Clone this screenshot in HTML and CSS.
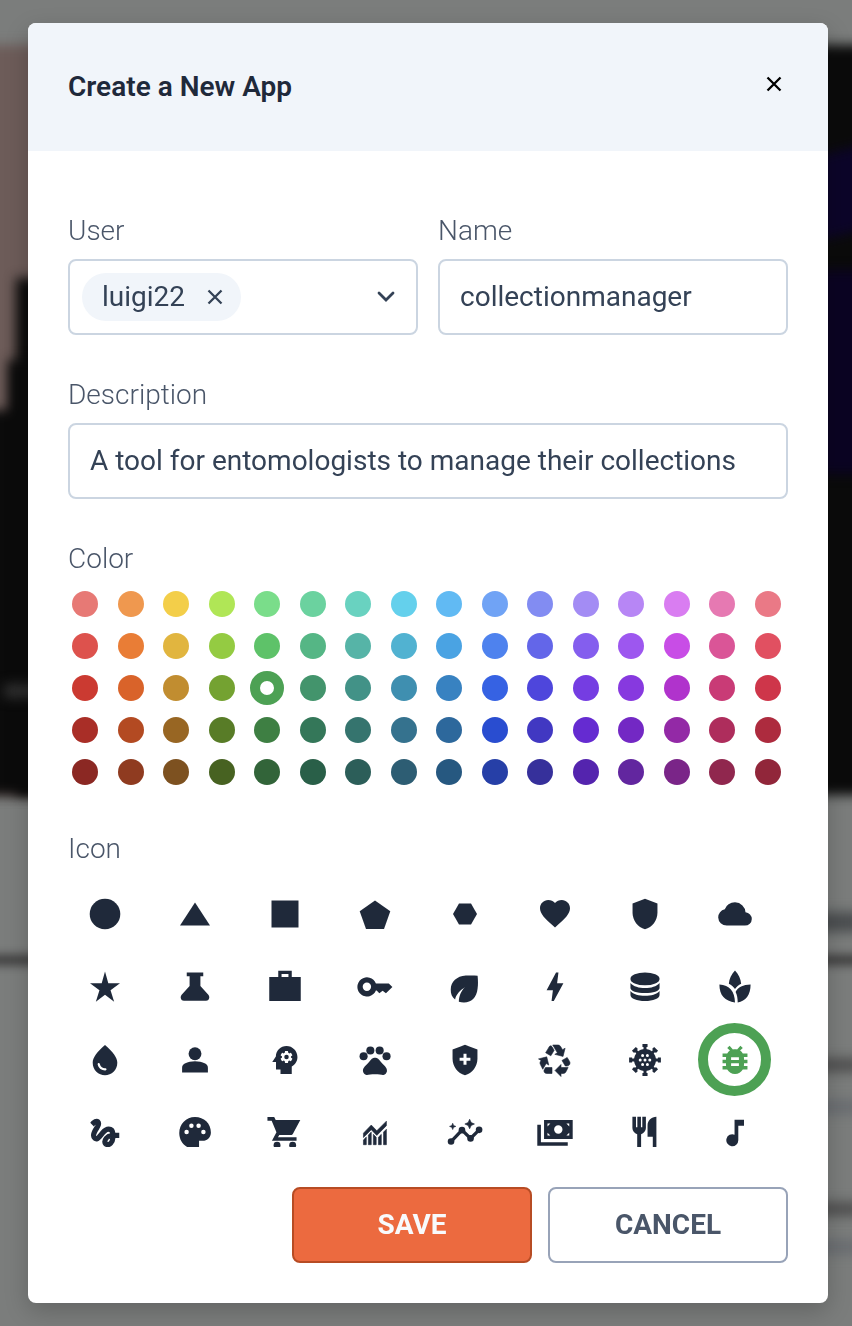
FILE: index.html
```html
<!DOCTYPE html>
<html lang="en">
<head>
<meta charset="utf-8">
<meta name="viewport" content="width=device-width, initial-scale=1">
<title>Create a New App</title>
<link rel="stylesheet" href="styles.css">
</head>
<body>
<div class="backdrop" aria-hidden="true">
  <div class="scene scene-hero"></div>
  <div class="scene scene-skyline"></div>
  <div class="scene scene-skyline-low"></div>
  <div class="scene scene-glow"></div>
  <div class="scene scene-glow-low"></div>
  <div class="scene scene-caption"></div>
  <div class="scene scene-heading"></div>
  <div class="scene scene-rule"></div>
  <div class="scene scene-line line-a"></div>
  <div class="scene scene-line line-b"></div>
  <div class="scene scene-line line-c"></div>
  <div class="scene scene-line line-d"></div>
</div>
<main class="page">
<form class="modal" role="dialog" aria-labelledby="modal-title">
  <header class="modal-header">
    <h1 class="modal-title" id="modal-title">Create a New App</h1>
    <button class="close" type="button" aria-label="Close"><svg class="cross" viewBox="0 0 16 16"><path d="M1.5 1.5l13 13M14.5 1.5l-13 13"/></svg></button>
  </header>
  <div class="modal-body">
    <div class="row">
      <div class="field">
        <label class="label" for="user">User</label>
        <div class="control multiselect">
          <span class="tag">luigi22<button class="tag-remove" type="button" aria-label="Remove luigi22"><svg class="cross" viewBox="0 0 16 16"><path d="M1.5 1.5l13 13M14.5 1.5l-13 13"/></svg></button></span>
          <input class="multiselect-input" id="user" type="text" role="combobox" aria-expanded="false">
          <button class="toggle" type="button" aria-label="Show users"><svg class="chevron" viewBox="0 0 18 12"><path d="M2 2l7 7 7-7"/></svg></button>
        </div>
      </div>
      <div class="field">
        <label class="label" for="name">Name</label>
        <input class="control" id="name" type="text" value="collectionmanager">
      </div>
    </div>
    <div class="field">
      <label class="label" for="description">Description</label>
      <input class="control" id="description" type="text" value="A tool for entomologists to manage their collections">
    </div>
    <fieldset class="field">
      <legend class="label">Color</legend>
      <div class="swatches">
        <input class="swatch" type="radio" name="color" aria-label="red 400" style="--c:#e77975">
        <input class="swatch" type="radio" name="color" aria-label="orange 400" style="--c:#ef984f">
        <input class="swatch" type="radio" name="color" aria-label="yellow 400" style="--c:#f3ce49">
        <input class="swatch" type="radio" name="color" aria-label="lime 400" style="--c:#b0e656">
        <input class="swatch" type="radio" name="color" aria-label="green 400" style="--c:#7add8a">
        <input class="swatch" type="radio" name="color" aria-label="emerald 400" style="--c:#6bd29f">
        <input class="swatch" type="radio" name="color" aria-label="teal 400" style="--c:#69d2c0">
        <input class="swatch" type="radio" name="color" aria-label="cyan 400" style="--c:#64d0ec">
        <input class="swatch" type="radio" name="color" aria-label="sky 400" style="--c:#61baf3">
        <input class="swatch" type="radio" name="color" aria-label="blue 400" style="--c:#70a3f5">
        <input class="swatch" type="radio" name="color" aria-label="indigo 400" style="--c:#828cf2">
        <input class="swatch" type="radio" name="color" aria-label="violet 400" style="--c:#a38cf4">
        <input class="swatch" type="radio" name="color" aria-label="purple 400" style="--c:#b786f5">
        <input class="swatch" type="radio" name="color" aria-label="fuchsia 400" style="--c:#d97df1">
        <input class="swatch" type="radio" name="color" aria-label="pink 400" style="--c:#e679b2">
        <input class="swatch" type="radio" name="color" aria-label="rose 400" style="--c:#ea7986">
        <input class="swatch" type="radio" name="color" aria-label="red 500" style="--c:#dd524d">
        <input class="swatch" type="radio" name="color" aria-label="orange 500" style="--c:#e97d36">
        <input class="swatch" type="radio" name="color" aria-label="yellow 500" style="--c:#e1b53f">
        <input class="swatch" type="radio" name="color" aria-label="lime 500" style="--c:#94cb42">
        <input class="swatch" type="radio" name="color" aria-label="green 500" style="--c:#5ec269">
        <input class="swatch" type="radio" name="color" aria-label="emerald 500" style="--c:#55b685">
        <input class="swatch" type="radio" name="color" aria-label="teal 500" style="--c:#56b4a7">
        <input class="swatch" type="radio" name="color" aria-label="cyan 500" style="--c:#51b2d1">
        <input class="swatch" type="radio" name="color" aria-label="sky 500" style="--c:#4aa3e3">
        <input class="swatch" type="radio" name="color" aria-label="blue 500" style="--c:#4e82ee">
        <input class="swatch" type="radio" name="color" aria-label="indigo 500" style="--c:#6366e9">
        <input class="swatch" type="radio" name="color" aria-label="violet 500" style="--c:#845eee">
        <input class="swatch" type="radio" name="color" aria-label="purple 500" style="--c:#9d57ef">
        <input class="swatch" type="radio" name="color" aria-label="fuchsia 500" style="--c:#c84de6">
        <input class="swatch" type="radio" name="color" aria-label="pink 500" style="--c:#da5597">
        <input class="swatch" type="radio" name="color" aria-label="rose 500" style="--c:#e15061">
        <input class="swatch" type="radio" name="color" aria-label="red 600" style="--c:#cb3a31">
        <input class="swatch" type="radio" name="color" aria-label="orange 600" style="--c:#d9632a">
        <input class="swatch" type="radio" name="color" aria-label="yellow 600" style="--c:#c18d30">
        <input class="swatch" type="radio" name="color" aria-label="lime 600" style="--c:#74a231">
        <input class="swatch" type="radio" name="color" aria-label="green 600" style="--c:#4da154" checked>
        <input class="swatch" type="radio" name="color" aria-label="emerald 600" style="--c:#43946c">
        <input class="swatch" type="radio" name="color" aria-label="teal 600" style="--c:#429287">
        <input class="swatch" type="radio" name="color" aria-label="cyan 600" style="--c:#3f8fb0">
        <input class="swatch" type="radio" name="color" aria-label="sky 600" style="--c:#3882c1">
        <input class="swatch" type="radio" name="color" aria-label="blue 600" style="--c:#3662e3">
        <input class="swatch" type="radio" name="color" aria-label="indigo 600" style="--c:#4e46dc">
        <input class="swatch" type="radio" name="color" aria-label="violet 600" style="--c:#753de2">
        <input class="swatch" type="radio" name="color" aria-label="purple 600" style="--c:#8739df">
        <input class="swatch" type="radio" name="color" aria-label="fuchsia 600" style="--c:#b033cc">
        <input class="swatch" type="radio" name="color" aria-label="pink 600" style="--c:#c93b76">
        <input class="swatch" type="radio" name="color" aria-label="rose 600" style="--c:#ce364a">
        <input class="swatch" type="radio" name="color" aria-label="red 700" style="--c:#a92e27">
        <input class="swatch" type="radio" name="color" aria-label="orange 700" style="--c:#b34a22">
        <input class="swatch" type="radio" name="color" aria-label="yellow 700" style="--c:#986623">
        <input class="swatch" type="radio" name="color" aria-label="lime 700" style="--c:#587c27">
        <input class="swatch" type="radio" name="color" aria-label="green 700" style="--c:#3e7f43">
        <input class="swatch" type="radio" name="color" aria-label="emerald 700" style="--c:#347759">
        <input class="swatch" type="radio" name="color" aria-label="teal 700" style="--c:#35746e">
        <input class="swatch" type="radio" name="color" aria-label="cyan 700" style="--c:#35728e">
        <input class="swatch" type="radio" name="color" aria-label="sky 700" style="--c:#2d689c">
        <input class="swatch" type="radio" name="color" aria-label="blue 700" style="--c:#294dd0">
        <input class="swatch" type="radio" name="color" aria-label="indigo 700" style="--c:#4138c2">
        <input class="swatch" type="radio" name="color" aria-label="violet 700" style="--c:#652bd1">
        <input class="swatch" type="radio" name="color" aria-label="purple 700" style="--c:#7328c4">
        <input class="swatch" type="radio" name="color" aria-label="fuchsia 700" style="--c:#9329a6">
        <input class="swatch" type="radio" name="color" aria-label="pink 700" style="--c:#ae2d5c">
        <input class="swatch" type="radio" name="color" aria-label="rose 700" style="--c:#ad2b3e">
        <input class="swatch" type="radio" name="color" aria-label="red 800" style="--c:#8b2823">
        <input class="swatch" type="radio" name="color" aria-label="orange 800" style="--c:#8f3b20">
        <input class="swatch" type="radio" name="color" aria-label="yellow 800" style="--c:#7d5120">
        <input class="swatch" type="radio" name="color" aria-label="lime 800" style="--c:#476221">
        <input class="swatch" type="radio" name="color" aria-label="green 800" style="--c:#326439">
        <input class="swatch" type="radio" name="color" aria-label="emerald 800" style="--c:#295f48">
        <input class="swatch" type="radio" name="color" aria-label="teal 800" style="--c:#2c5e59">
        <input class="swatch" type="radio" name="color" aria-label="cyan 800" style="--c:#2d5d73">
        <input class="swatch" type="radio" name="color" aria-label="sky 800" style="--c:#265880">
        <input class="swatch" type="radio" name="color" aria-label="blue 800" style="--c:#263fa7">
        <input class="swatch" type="radio" name="color" aria-label="indigo 800" style="--c:#36309b">
        <input class="swatch" type="radio" name="color" aria-label="violet 800" style="--c:#5424ae">
        <input class="swatch" type="radio" name="color" aria-label="purple 800" style="--c:#62269f">
        <input class="swatch" type="radio" name="color" aria-label="fuchsia 800" style="--c:#7a2588">
        <input class="swatch" type="radio" name="color" aria-label="pink 800" style="--c:#90274e">
        <input class="swatch" type="radio" name="color" aria-label="rose 800" style="--c:#91263a">
      </div>
    </fieldset>
    <fieldset class="field">
      <legend class="label">Icon</legend>
      <div class="icons">
        <label class="icon"><input type="radio" name="icon" aria-label="circle"><svg viewBox="0 0 24 24"><circle cx="12" cy="12" r="10.2"/></svg></label>
        <label class="icon"><input type="radio" name="icon" aria-label="triangle"><svg viewBox="0 0 24 24"><path d="M12 4.4l10 15.2H2z"/></svg></label>
        <label class="icon"><input type="radio" name="icon" aria-label="square"><svg viewBox="0 0 24 24"><path d="M3 3h18v18H3z"/></svg></label>
        <label class="icon"><input type="radio" name="icon" aria-label="pentagon"><svg viewBox="0 0 24 24"><path d="M12 3l10.2 7.2L18 22H6L1.8 10.2z"/></svg></label>
        <label class="icon"><input type="radio" name="icon" aria-label="hexagon"><svg viewBox="0 0 24 24"><path d="M8 5h8l4 7-4 7H8l-4-7z"/></svg></label>
        <label class="icon"><input type="radio" name="icon" aria-label="heart"><svg viewBox="0 0 24 24"><path d="M12 21l-1.450-1.320C5.400 15.010 2 11.930 2 8.150 2 5.070 4.420 2.650 7.500 2.650c1.740 0 3.410.810 4.500 2.090 1.090-1.280 2.760-2.090 4.500-2.090 3.080 0 5.500 2.420 5.500 5.500 0 3.780-3.400 6.860-8.550 11.540z"/></svg></label>
        <label class="icon"><input type="radio" name="icon" aria-label="shield"><svg viewBox="0 0 24 24"><path d="M12 1.900 3.700 5v6.100c0 5.050 3.500 9.760 8.300 11 4.800-1.240 8.300-5.950 8.300-11V5z"/></svg></label>
        <label class="icon"><input type="radio" name="icon" aria-label="cloud"><svg viewBox="0 0 24 24"><path d="M6.500 19.700q-2.375 0-4-1.600T.800 14.300q0-1.950 1.200-3.475T5.200 8.900q.600-2.100 2.500-3.400T12 4.200q2.900 0 4.950 2.050T19 10.800q1.800.200 3 1.500t1.200 3q0 1.850-1.350 3.125T18.600 19.700z"/></svg></label>

        <label class="icon"><input type="radio" name="icon" aria-label="star"><svg viewBox="0 0 24 24"><path d="M14.200 9.500 12 1.700 9.800 9.500H2l6.300 4.700L5.900 21.800 12 17.200l6.100 4.600-2.400-7.600L22 9.500z"/></svg></label>
        <label class="icon"><input type="radio" name="icon" aria-label="flask"><svg viewBox="0 0 24 24"><path d="M6.500 2.400h11v2.400h-1.900v6.600l5.300 5.800c1.300 1.500.5 4-1.500 4H4.600c-2 0-2.800-2.500-1.500-4l5.300-5.800V4.800H6.500z"/></svg></label>
        <label class="icon"><input type="radio" name="icon" aria-label="briefcase"><svg viewBox="0 0 24 24"><path fill-rule="evenodd" d="M1.500 5.300h6V1.100h9v4.200h6v16h-21zm8.200 0h4.600V3.400H9.700z"/></svg></label>
        <label class="icon"><input type="radio" name="icon" aria-label="key"><svg viewBox="0 0 24 24"><path fill-rule="evenodd" d="M12.600 9.600h8.600l2.400 2.400-4.300 4.200-2.200-1.700-2.200 1.700-1.800-1.900h-.5A6.400 6.400 0 1 1 12.600 9.600zM6.600 9a2.800 2.800 0 1 0 0 5.600 2.800 2.800 0 0 0 0-5.600z"/></svg></label>
        <label class="icon"><input type="radio" name="icon" aria-label="leaf"><svg viewBox="0 0 24 24"><path d="M5.400 20.300C3.300 18.800 2.400 16.400 2.500 13.600 2.600 8.600 6.500 4.800 12.500 4.400c2.500-.2 5.500-.2 7.900.1.300 3 .4 6 0 8.500-.6 6.200-4.400 9.400-9.200 9.300-1.200 0-2.200-.2-3.300-.5 0-3.300 1.500-7.400 4.100-9.600-3.500 1.800-6 5.300-6.600 8.100z"/></svg></label>
        <label class="icon"><input type="radio" name="icon" aria-label="bolt"><svg viewBox="0 0 24 24"><path d="M12.700 2.400h1.600l-.9 7.100h4.200L11.200 21.300H9.700l.9-7.100H6.400z"/></svg></label>
        <label class="icon"><input type="radio" name="icon" aria-label="database"><svg viewBox="0 0 24 24"><ellipse cx="12" cy="6.600" rx="9.700" ry="4.300"/><path d="M2.300 9.300c2 2.300 5.600 3.400 9.700 3.400s7.700-1.100 9.700-3.400v3.300c0 2-4.300 3.400-9.700 3.400s-9.700-1.400-9.700-3.400zM2.300 14.700c2 2.200 5.600 3.200 9.700 3.200s7.700-1 9.700-3.200v2.600c0 2.400-4.300 4-9.700 4s-9.700-1.600-9.700-4z"/></svg></label>
        <label class="icon"><input type="radio" name="icon" aria-label="plant"><svg viewBox="0 0 24 24"><path d="M12 1c2.400 2.400 3.900 5.700 4.100 8.800-1.700.9-3.100 2.100-4.100 3.500-1-1.400-2.400-2.600-4.100-3.500C8.100 6.700 9.600 3.400 12 1zM1.600 10.400c6.800.2 10.200 4.800 10.400 11.900-6.700-.8-10.400-4.600-10.400-11.900zM22.400 10.400c0 7-3.300 11.100-8.600 11.900 0-3-.4-5-1.400-7 1.600-3 5-4.900 10-4.900z"/></svg></label>

        <label class="icon"><input type="radio" name="icon" aria-label="drop"><svg viewBox="0 0 24 24"><path fill-rule="evenodd" d="M12 2c-5.330 4.550-8.200 8.480-8.200 11.800 0 4.980 3.800 8.300 8.200 8.300s8.200-3.320 8.200-8.300c0-3.320-2.870-7.250-8.200-11.800zM7.830 14c.370 0 .670.260.740.620.410 2.220 2.280 2.980 3.640 2.870.430-.020.790.320.790.750 0 .400-.320.730-.720.750-2.130.130-4.620-1.090-5.190-4.120-.080-.450.280-.870.740-.870z"/></svg></label>
        <label class="icon"><input type="radio" name="icon" aria-label="person"><svg viewBox="0 0 24 24"><circle cx="12" cy="7.800" r="4.300"/><path d="M3.400 20.400v-3.200c0-1.300.7-2.300 1.800-2.800 4.300-2 9.300-2 13.600 0 1.100.5 1.800 1.500 1.800 2.800v3.200z"/></svg></label>
        <label class="icon"><input type="radio" name="icon" aria-label="mind"><svg viewBox="0 0 24 24"><circle cx="13" cy="10" r="1.500"/><path fill-rule="evenodd" d="M13 2.700C9.100 2.700 6 5.700 5.900 9.600L3.500 13.300H6v5h3v3h7.500v-5C18.900 15.100 20.300 12.700 20.300 10c0-4-3.300-7.300-7.300-7.300zm3 7.300c0 .13-.01.26-.02.39l.83.66c.08.06.1.16.05.25l-.8 1.390c-.05.09-.16.12-.24.09l-.99-.4c-.21.16-.43.29-.67.39L14 13.830c-.01.1-.1.17-.2.17h-1.600c-.1 0-.18-.07-.2-.17l-.15-1.060c-.25-.1-.47-.23-.68-.39l-.99.4c-.09.03-.2 0-.25-.09l-.8-1.390c-.05-.08-.03-.19.05-.25l.84-.66c-.01-.13-.02-.26-.02-.39s.02-.27.04-.39l-.85-.66c-.08-.06-.1-.16-.05-.26l.8-1.380c.05-.09.15-.12.24-.09l1 .4c.2-.15.43-.29.67-.39L12 6.170c.02-.1.1-.17.2-.17h1.600c.1 0 .18.07.2.17l.15 1.060c.24.1.46.23.67.39l1-.4c.09-.03.2 0 .24.09l.8 1.380c.05.09.03.2-.05.26l-.85.66c.03.12.04.25.04.39z"/></svg></label>
        <label class="icon"><input type="radio" name="icon" aria-label="paw"><svg viewBox="0 0 24 24"><circle cx="4.400" cy="9.500" r="2.700"/><circle cx="8.900" cy="5.700" r="2.700"/><circle cx="15.100" cy="5.700" r="2.700"/><circle cx="19.700" cy="9.500" r="2.700"/><path d="M17.340 14.860c-.87-1.020-1.600-1.890-2.480-2.910-.46-.54-1.050-1.080-1.750-1.320-.7-.2-1.500-.2-2.230.01-.7.240-1.280.780-1.750 1.320-.87 1.020-1.600 1.890-2.480 2.910-1.310 1.310-2.920 2.760-2.620 4.790.29 1.020 1.020 2.030 2.330 2.320.73.150 3.060-.44 5.540-.44h.18c2.480 0 4.810.58 5.540.44 1.310-.29 2.040-1.310 2.330-2.320.31-2.040-1.300-3.490-2.610-4.800z"/></svg></label>
        <label class="icon"><input type="radio" name="icon" aria-label="health shield"><svg viewBox="0 0 24 24"><path fill-rule="evenodd" d="M12 1.900 3.700 5v6.100c0 5.050 3.500 9.760 8.300 11 4.800-1.240 8.300-5.950 8.300-11V5zM8.400 10.500H11V7.900h2v2.600h2.600v2H13v2.600h-2v-2.600H8.400z"/></svg></label>
        <label class="icon"><input type="radio" name="icon" aria-label="recycle"><svg viewBox="0 0 24 24"><path class="heavy" d="M5.770 7.150 7.200 4.780l1.030-1.710c.39-.65 1.330-.65 1.720 0l1.480 2.460-1.230 2.060-1 1.620-3.430-2.060zm15.950 5.820-1.600-2.660-3.460 2L18.870 16H20c.76 0 1.450-.43 1.790-1.110.14-.28.21-.58.21-.89 0-.36-.1-.71-.28-1.030zM16 21h1.500c.76 0 1.450-.43 1.790-1.110L20.740 17H16v-2l-4 4 4 4v-2zm-6-4H5.700l-.84 1.410c-.3.500-.32 1.120-.06 1.650.28.570.87.940 1.520.940H10v-4zm-3.880-2.650 1.730 1.040L6.480 9.900 1 11.270l1.700 1.020-.41.690c-.35.590-.38 1.310-.07 1.920l1.630 3.260 2.270-3.810zm10.900-9.210-1.300-2.170C15.350 2.370 14.700 2 14 2h-3.530l3.120 5.200-1.720 1.030 5.490 1.370 1.370-5.490-1.710 1.030z"/></svg></label>
        <label class="icon"><input type="radio" name="icon" aria-label="virus"><svg viewBox="0 0 24 24"><circle cx="12" cy="12" r="7.300"/><path class="line" stroke-width="2" d="M12 2v20M2 12h20M5.300 5.300l13.400 13.400M18.700 5.300 5.300 18.700M10.300 2.400h3.400M10.300 21.600h3.400M2.400 10.300v3.400M21.600 10.300v3.400M4 6.600 6.600 4M17.400 4 20 6.600M20 17.400 17.400 20M6.600 20 4 17.400"/><path class="dots" d="M10.400 9h0M13.600 9h0M8.800 12h0M12 12h0M15.200 12h0M10.400 15h0M13.600 15h0"/></svg></label>
        <label class="icon"><input type="radio" name="icon" aria-label="bug" checked><svg viewBox="0 0 24 24"><path fill-rule="evenodd" d="M20.300 7.700h-3.100c-.45-.78-1.070-1.450-1.820-1.960L17.200 4 15.600 2.500l-2.200 2.500c-.44-.11-.91-.17-1.400-.17s-.96.06-1.410.17L8.400 2.500 6.800 4l1.820 1.740C7.880 6.250 7.260 6.920 6.810 7.700H3.700V10h2.390c-.05.330-.09.660-.09 1v.8H3.700v2.400H6v.8c0 .34.04.67.09 1H3.700v2.300h3.110c1.040 1.790 2.970 3 5.190 3s4.150-1.210 5.190-3h3.110V16h-2.390c.05-.33.09-.66.09-1v-.8h2.300v-2.400H18V11c0-.34-.04-.67-.09-1h2.390zM14.600 16H9.400v-1.800h5.200zm0-4H9.400v-1.800h5.200z"/></svg></label>

        <label class="icon"><input type="radio" name="icon" aria-label="gesture"><svg viewBox="0 0 24 24"><path class="heavier" fill-rule="evenodd" d="M4.590 6.890c.7-.71 1.400-1.350 1.710-1.220.5.200 0 1.030-.3 1.520-.25.420-2.860 3.890-2.860 6.310 0 1.280.48 2.340 1.340 2.980.75.560 1.740.730 2.640.460 1.070-.31 1.950-1.400 3.060-2.770 1.210-1.490 2.830-3.440 4.080-3.440 1.630 0 1.650 1.010 1.760 1.790-3.780.640-5.380 3.670-5.380 5.370 0 1.700 1.440 3.090 3.210 3.090 1.630 0 4.290-1.330 4.690-6.100H21v-2.500h-2.470c-.15-1.650-1.090-4.200-4.030-4.200-2.250 0-4.180 1.910-4.940 2.840-.58.730-2.060 2.480-2.290 2.720-.25.300-.68.840-1.110.84-.45 0-.72-.83-.36-1.920.35-1.090 1.400-2.860 1.850-3.520.78-1.140 1.300-1.920 1.300-3.280C8.950 3.690 7.310 3 6.440 3 5.120 3 3.970 4 3.720 4.250c-.36.360-.66.660-.88.930l1.750 1.710zm9.290 11.660c-.31 0-.74-.26-.74-.72 0-.6.73-2.200 2.870-2.760-.3 2.690-1.430 3.480-2.130 3.480z"/></svg></label>
        <label class="icon"><input type="radio" name="icon" aria-label="palette"><svg viewBox="0 0 24 24"><path d="M12 1.300C6 1.300 1.500 6 1.500 12S6 22.700 12 22.700h2.700V17.200H17c3.300 0 5.600-2.400 5.600-5.600C22.600 5.600 18 1.300 12 1.300z"/><path class="dots wide" d="M6.400 11.400h0M9.600 7.200h0M14.400 7.200h0M17.600 11.400h0"/></svg></label>
        <label class="icon"><input type="radio" name="icon" aria-label="cart"><svg viewBox="0 0 24 24"><path d="M.3 1.300h4.500l1 2H22.200l-4.800 9c-.4.700-.9 1-1.500 1H8.200l-.9 1.500h12.400v2.300H3.300l3-5.600-3.200-7.600H.3z"/><circle cx="6.700" cy="20.100" r="2.300"/><circle cx="17.100" cy="20.100" r="2.300"/></svg></label>
        <label class="icon"><input type="radio" name="icon" aria-label="chart"><svg viewBox="0 0 24 24"><path class="heavy" d="M4.300 12.100 9.500 6.700l3.700 3.800 6.400-6.400v3l-6.400 6.500-3.700-3.800-5.200 5.200zM4.300 16.600l1.900-1.900v5.100H4.300zM7.600 13.300l1.900-1.900v8.400H7.600zM10.900 12.900l1.900 1.900v5h-1.900zM14.300 14.800l1.900-1.900v6.900h-1.900zM17.700 11.400l1.900-1.900v10.300h-1.900z"/></svg></label>
        <label class="icon"><input type="radio" name="icon" aria-label="insights"><svg viewBox="0 0 24 24"><circle cx="2.700" cy="17.700" r="2.200"/><circle cx="10" cy="10.100" r="2.200"/><circle cx="15.700" cy="15.600" r="2.200"/><circle cx="21.400" cy="9.900" r="2.200"/><path class="line" stroke-width="2.200" d="M2.700 17.700 10 10.100l5.700 5.500 5.700-5.700"/><path class="heavy" d="M15.100 2.800l1 2.200 2.200 1-2.200 1-1 2.200-1-2.200-2.200-1 2.200-1zM3.800 5.500l.6 1.500 1.500.6-1.500.6-.6 1.500-.6-1.500-1.500-.6 1.500-.6z"/></svg></label>
        <label class="icon"><input type="radio" name="icon" aria-label="payments"><svg viewBox="0 0 24 24"><path fill-rule="evenodd" d="M4.700 3.400h19.100V16H4.700zM14.200 6.900a2.800 2.800 0 1 0 0 5.600 2.800 2.800 0 0 0 0-5.600zM7 5.700v1.900L8.900 5.700zM21.500 5.700h-1.900l1.900 1.900zM7 13.700h1.900L7 11.800zM21.500 13.700v-1.900l-1.900 1.900zM.2 6.500h2.400v11.700h17.900v2.300H.2z"/></svg></label>
        <label class="icon"><input type="radio" name="icon" aria-label="restaurant"><svg viewBox="0 0 24 24"><path d="M3.600 1.200h2.400v7h.9v-7h2.400v7h.9v-7h2.400v7.500c0 1.900-1.400 3.600-3.200 4.100v9.500H6.800v-9.500C4.900 12.300 3.600 10.600 3.600 8.700zM19.600 1.200v21.100h-2.400v-7.800h-3.500V6.900c0-3.200 2.600-5.700 5.900-5.700z"/></svg></label>
        <label class="icon"><input type="radio" name="icon" aria-label="music"><svg viewBox="0 0 24 24"><path d="M11.700 3.100H18v4h-3.800v9.700a4 4 0 1 1-2.500-3.700z"/></svg></label>
      </div>
    </fieldset>
    <footer class="actions">
      <button class="button primary" type="submit">SAVE</button>
      <button class="button" type="button">CANCEL</button>
    </footer>
  </div>
</form>
</main>
</body>
</html>
```
FILE: styles.css
```css
* { box-sizing: border-box; }

body {
  margin: 0;
  background: #7b7d7c;
  color: #344256;
  font-family: Roboto, "Liberation Sans", sans-serif;
  font-size: 28px;
}

input, button { font: inherit; color: inherit; }
button { cursor: pointer; }

/* Blurred site behind the dialog */
.backdrop { position: fixed; inset: 0; overflow: hidden; background: #7b7d7c; }
.scene { position: absolute; filter: blur(6px); }
.scene-hero { left: -20px; right: -20px; top: 45px; height: 750px; background: linear-gradient(to right, #6d5c59 120px, #0b0b0b 120px); }
.scene-skyline { left: 16px; width: 120px; top: 278px; height: 517px; background: #0b0b0b; }
.scene-skyline-low { left: -20px; width: 60px; top: 410px; height: 385px; background: #0b0b0b; box-shadow: 28px -50px 0 #0b0b0b; }
.scene-glow { right: -20px; width: 60px; top: 150px; height: 85px; background: #0c0529; transform: skewY(-14deg); }
.scene-glow-low { right: -20px; width: 60px; top: 270px; height: 204px; background: #0b0423; }
.scene-caption { left: 4px; width: 60px; top: 684px; height: 14px; background: #303030; }
.scene-heading { right: -10px; width: 60px; top: 912px; height: 20px; background: #4b4e50; }
.scene-rule { left: -20px; right: -20px; top: 954px; height: 12px; background: #454545; filter: blur(4px); }
.scene-line { right: -10px; width: 60px; height: 14px; background: #505050; }
.line-a { top: 1058px; }
.line-b { top: 1100px; background: #6a6d71; }
.line-c { top: 1202px; }
.line-d { top: 1240px; background: #6a6d71; }

.page {
  position: relative;
  display: flex;
  justify-content: center;
  padding: 23px 24px 23px 28px;
}

.modal {
  width: 100%;
  max-width: 800px;
  background: #fff;
  border-radius: 8px;
  overflow: hidden;
  box-shadow: 0 8px 24px rgba(0, 0, 0, 0.2);
}

.modal-header {
  display: flex;
  align-items: center;
  justify-content: space-between;
  min-height: 128px;
  padding: 0 40px 2px;
  background: #f1f5fa;
}
.modal-title { margin: 0; font-size: 28px; font-weight: 600; color: #1f293a; }
.close {
  display: grid;
  place-items: center;
  width: 28px;
  height: 28px;
  margin: 0 0 4px;
  padding: 0;
  border: 0;
  background: none;
  color: #000;
}
.cross, .chevron { display: block; fill: none; stroke: currentColor; }
.cross { width: 16px; height: 16px; stroke-width: 2.300; }
.chevron { width: 18px; height: 12px; stroke-width: 2.800; stroke-linecap: round; }

.modal-body {
  display: flex;
  flex-direction: column;
  gap: 38px;
  padding: 58px 40px 40px;
}
.row { display: grid; grid-template-columns: 1fr 1fr; gap: 20px; }
.field { display: block; min-width: 0; margin: 0; padding: 0; border: 0; }
.label {
  display: block;
  margin: 0 0 8px;
  padding: 2px 0 0;
  line-height: 40px;
  font-weight: 300;
  color: #4a5669;
}
.control {
  display: block;
  width: 100%;
  height: 76px;
  padding: 0 20px 2px;
  border: 2px solid #cbd5e1;
  border-radius: 8px;
  background: #fff;
  color: #344256;
}

.multiselect { display: flex; align-items: center; padding: 0 21px 0 12px; }
.tag {
  display: flex;
  align-items: center;
  gap: 22px;
  height: 48px;
  padding: 0 18px 2px 20px;
  border-radius: 24px;
  background: #f1f5fa;
}
.tag-remove, .toggle { display: block; padding: 0; border: 0; background: none; }
.tag-remove { margin-top: 2px; }
.multiselect-input { flex: 1; min-width: 0; border: 0; outline: 0; background: none; }

.swatches { display: grid; grid-template-columns: repeat(16, 1fr); gap: 8px; }
.swatch {
  appearance: none;
  width: 34px;
  height: 34px;
  margin: 0;
  border: 4px solid transparent;
  border-radius: 50%;
  background: var(--c) padding-box;
}
.swatch:checked { border: 10px solid var(--c); background: #fff padding-box; }

.icons {
  display: grid;
  grid-template-columns: repeat(8, 1fr);
  grid-auto-rows: 73px;
  height: 270px;
  overflow-y: auto;
  scrollbar-width: none;
}
.icon { display: grid; width: 73px; height: 73px; color: #1f293a; }
.icon > * { grid-area: 1 / 1; place-self: center; }
.icon input { appearance: none; width: 73px; height: 73px; margin: 0; border-radius: 50%; }
.icon input:checked { border: 10px solid #4da154; }
.icon svg { width: 36px; height: 36px; fill: currentColor; }
.icon input:checked + svg { color: #4da154; }
.icon .line { fill: none; stroke: currentColor; }
.icon .heavy { stroke: currentColor; stroke-width: 0.400; }
.icon .heavier { stroke: currentColor; stroke-width: 1; }
.icon .dots { fill: none; stroke: #fff; stroke-width: 2; stroke-linecap: round; }
.icon .wide { stroke-width: 3; }

.actions { display: flex; justify-content: flex-end; gap: 16px; margin-top: 2px; }
.button {
  width: 240px;
  height: 76px;
  padding: 0 0 2px;
  border: 2px solid #98a3b8;
  border-radius: 8px;
  background: #fff;
  color: #4a5669;
  font-weight: 700;
}
.primary { border-color: #b74c24; background: #ec6a3f; color: #f8fafc; }
```
